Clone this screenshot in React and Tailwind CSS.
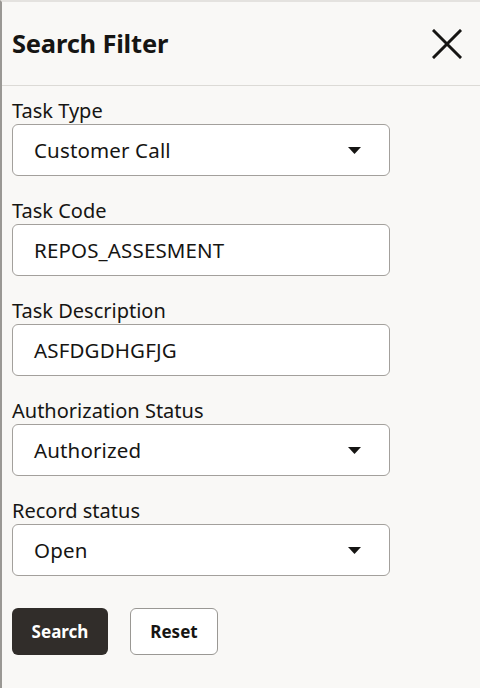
const fields = [
  { label: 'Task Type', value: 'Customer Call', select: true },
  { label: 'Task Code', value: 'REPOS_ASSESMENT' },
  { label: 'Task Description', value: 'ASFDGDHGFJG' },
  { label: 'Authorization Status', value: 'Authorized', select: true },
  { label: 'Record status', value: 'Open', select: true },
];

function Caret() {
  return (
    <svg width="13" height="7" viewBox="0 0 13 7" className="shrink-0">
      <path d="M0 0h13L6.5 7z" fill="#161513" />
    </svg>
  );
}

function CloseIcon() {
  return (
    <svg width="30" height="30" viewBox="0 0 30 30">
      <path d="M2 2L28 28M28 2L2 28" stroke="#161513" strokeWidth="3" strokeLinecap="square" />
    </svg>
  );
}

export default function App() {
  return (
    <div
      className="w-[480px] h-[688px] bg-[#f9f8f6] border-l-2 border-t-2 border-l-[#9a9894] border-t-[#e4e2df] text-[#161513] overflow-hidden"
      style={{ fontFamily: '"Noto Sans", "Open Sans", sans-serif' }}
    >
      <div className="h-[84px] flex items-center justify-between pl-[10px] pr-[18px] border-b border-[#dcdad6]">
        <h1 className="text-[25.5px] font-bold tracking-[-0.2px]">Search Filter</h1>
        <CloseIcon />
      </div>
      <div className="pl-[10px] pt-[12px] flex flex-col">
        {fields.map(f => (
          <div key={f.label} className="mb-[22px]">
            <div className="text-[20px] leading-[26px] h-[26px]">{f.label}</div>
            <div className="w-[378px] h-[52px] bg-white border border-[#a3a09c] rounded-[6px] flex items-center justify-between pl-[21px] pr-[28px]">
              <span className="text-[20.5px] tracking-[0.15px]">{f.value}</span>
              {f.select && <Caret />}
            </div>
          </div>
        ))}
        <div className="flex gap-[22px] mt-[10px]">
          <button className="w-[96px] h-[47px] bg-[#312d2a] text-white rounded-[6px] text-[17px] font-bold">Search</button>
          <button className="w-[88px] h-[47px] bg-white border border-[#9a9894] rounded-[6px] text-[17px] font-bold">Reset</button>
        </div>
      </div>
    </div>
  );
}
